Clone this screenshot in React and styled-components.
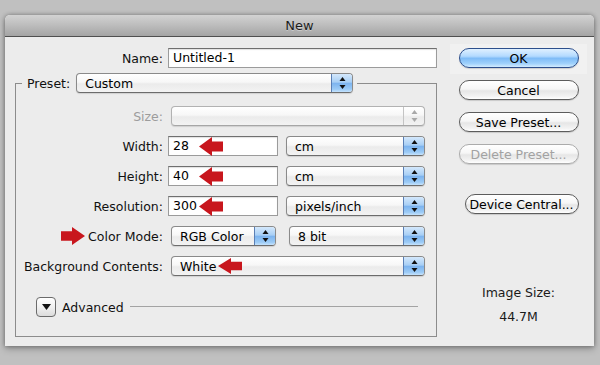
import styled, { createGlobalStyle } from "styled-components";

const GlobalStyle = createGlobalStyle`
  html, body {
    margin: 0;
    padding: 0;
  }
  body {
    width: 600px;
    height: 365px;
    overflow: hidden;
    background: #c0c0c0;
    font-family: "DejaVu Sans", "Liberation Sans", sans-serif;
    font-size: 12.5px;
    color: #111;
  }
`;

function RedArrow({ dir = "left", h = 19 }) {
  const pts =
    dir === "left"
      ? "0,9.5 13,0 13,4.5 24,4.5 24,14.5 13,14.5 13,19"
      : "24,9.5 11,0 11,4.5 0,4.5 0,14.5 11,14.5 11,19";
  return (
    <svg width="24" height={h} viewBox="0 0 24 19" preserveAspectRatio="none">
      <polygon points={pts} fill="#c8161d" />
    </svg>
  );
}

function Popup({ w, ml = 3, disabled, arrowAt, children }) {
  return (
    <PopupBox $w={w} $ml={ml} $disabled={disabled}>
      <PopupText $disabled={disabled}>{children}</PopupText>
      {arrowAt && (
        <Marker $left={arrowAt} $top={1}>
          <RedArrow h={16} />
        </Marker>
      )}
      <Stepper $disabled={disabled}>
        <svg width="7" height="12" viewBox="0 0 7 12">
          <path d="M3.5 0 L6.5 4 H0.5 Z M0.5 8 H6.5 L3.5 12 Z" fill={disabled ? "#a9a9a9" : "#111"} />
        </svg>
      </Stepper>
    </PopupBox>
  );
}

function TextField({ w, children, arrow }) {
  return (
    <Field $w={w}>
      {children}
      {arrow && (
        <Marker $left={30} $top={0}>
          <RedArrow />
        </Marker>
      )}
    </Field>
  );
}

export default function App() {
  return (
    <>
      <GlobalStyle />
      <Stage>
        <Window>
          <TitleBar>New</TitleBar>
          <Body>
            <Main>
              <NameRow>
                <Label>Name:</Label>
                <TextField w={269}>Untitled-1</TextField>
              </NameRow>
              <Group>
                <Legend>
                  <span>Preset:</span>
                  <Popup w={277} ml={6}>Custom</Popup>
                </Legend>
                <Rows>
                  <Row>
                    <Label $disabled>Size:</Label>
                    <Controls>
                      <Popup w={254} disabled />
                    </Controls>
                  </Row>
                  <Row>
                    <Label>Width:</Label>
                    <Controls>
                      <TextField w={110} arrow>28</TextField>
                      <Popup w={139} ml={8}>cm</Popup>
                    </Controls>
                  </Row>
                  <Row>
                    <Label>Height:</Label>
                    <Controls>
                      <TextField w={110} arrow>40</TextField>
                      <Popup w={139} ml={8}>cm</Popup>
                    </Controls>
                  </Row>
                  <Row>
                    <Label>Resolution:</Label>
                    <Controls>
                      <TextField w={110} arrow>300</TextField>
                      <Popup w={139} ml={8}>pixels/inch</Popup>
                    </Controls>
                  </Row>
                  <Row>
                    <Label>
                      <RedArrow dir="right" h={18} />
                      <span>Color Mode:</span>
                    </Label>
                    <Controls>
                      <Popup w={105}>RGB Color</Popup>
                      <Popup w={136} ml={13}>8 bit</Popup>
                    </Controls>
                  </Row>
                  <Row>
                    <Label>Background Contents:</Label>
                    <Controls>
                      <Popup w={254} arrowAt={46}>White</Popup>
                    </Controls>
                  </Row>
                </Rows>
                <AdvancedRow>
                  <Disclosure>
                    <svg width="9" height="6" viewBox="0 0 9 6">
                      <path d="M0 0 H9 L4.5 6 Z" fill="#111" />
                    </svg>
                  </Disclosure>
                  <span>Advanced</span>
                  <Rule />
                </AdvancedRow>
              </Group>
            </Main>
            <Side>
              <DefaultWell>
                <PushButton $primary>OK</PushButton>
              </DefaultWell>
              <ButtonStack>
                <PushButton>Cancel</PushButton>
                <PushButton $mt={12}>Save Preset...</PushButton>
                <PushButton $mt={12} $disabled>Delete Preset...</PushButton>
                <PushButton $mt={30} $w={114}>Device Central...</PushButton>
              </ButtonStack>
              <SizeInfo>
                <div>Image Size:</div>
                <SizeValue>44.7M</SizeValue>
              </SizeInfo>
            </Side>
          </Body>
        </Window>
      </Stage>
    </>
  );
}

const Stage = styled.div`
  padding: 15px 6px 0 5px;
`;

const Window = styled.div`
  width: 589px;
  height: 331px;
  background: #ececec;
  border-radius: 5px 5px 0 0;
  box-shadow: 0 0 4px rgba(0, 0, 0, 0.35), 0 3px 7px rgba(0, 0, 0, 0.25);
  display: flex;
  flex-direction: column;
  overflow: hidden;
`;

const TitleBar = styled.div`
  height: 21px;
  line-height: 21px;
  text-align: center;
  font-size: 13px;
  color: #1c1c1c;
  background: linear-gradient(#d2d2d2, #bcbcbc 50%, #a4a4a4);
  border-bottom: 1px solid #4f4f4f;
  text-shadow: 0 1px 0 rgba(255, 255, 255, 0.35);
`;

const Body = styled.div`
  flex: 1;
  display: flex;
  padding: 0 7px 0 10px;
`;

const Main = styled.div`
  width: 422px;
  padding-top: 11px;
`;

const NameRow = styled.div`
  display: grid;
  grid-template-columns: 148px 269px;
  column-gap: 5px;
  align-items: center;
`;

const Label = styled.div`
  display: flex;
  justify-content: flex-end;
  align-items: center;
  gap: 3px;
  white-space: nowrap;
  color: ${(p) => (p.$disabled ? "#9c9c9c" : "#111")};
`;

const Group = styled.fieldset`
  margin: 5px 0 0;
  padding: 0 0 19px;
  border: 1px solid #8c8c8c;
  min-width: 0;
`;

const Legend = styled.legend`
  margin-left: 6px;
  padding: 0 4px 0 5px;
  display: flex;
  align-items: center;
`;

const Rows = styled.div`
  padding-top: 13px;
  display: flex;
  flex-direction: column;
  gap: 10px;
`;

const Row = styled.div`
  display: grid;
  grid-template-columns: 147px 1fr;
  column-gap: 5px;
  align-items: center;
  height: 20px;
`;

const Controls = styled.div`
  display: flex;
  align-items: center;
`;

const Field = styled.div`
  position: relative;
  box-sizing: border-box;
  width: ${(p) => p.$w}px;
  height: 20px;
  padding-left: 4px;
  line-height: 18px;
  background: #fff;
  border: 1px solid #9b9b9b;
  border-top-color: #6f6f6f;
  box-shadow: inset 0 1px 1px rgba(0, 0, 0, 0.12);
  color: #000;
`;

const Marker = styled.div`
  position: absolute;
  left: ${(p) => p.$left}px;
  top: ${(p) => p.$top}px;
  line-height: 0;
`;

const PopupBox = styled.div`
  position: relative;
  box-sizing: border-box;
  width: ${(p) => p.$w}px;
  height: 20px;
  margin-left: ${(p) => p.$ml}px;
  display: flex;
  align-items: center;
  border: 1px solid ${(p) => (p.$disabled ? "#b2b2b2" : "#8a8a8a")};
  border-bottom-color: ${(p) => (p.$disabled ? "#a6a6a6" : "#6c6c6c")};
  border-radius: 4px;
  background: linear-gradient(#ffffff, #f7f7f7 45%, #ebebeb 55%, #f3f3f3);
  box-shadow: 0 1px 1px rgba(0, 0, 0, 0.12);
  overflow: hidden;
`;

const PopupText = styled.div`
  flex: 1;
  padding-left: 8px;
  white-space: nowrap;
  color: ${(p) => (p.$disabled ? "#9c9c9c" : "#000")};
`;

const Stepper = styled.div`
  width: 20px;
  height: 100%;
  display: flex;
  align-items: center;
  justify-content: center;
  border-left: 1px solid ${(p) => (p.$disabled ? "#c4c4c4" : "#5a7fb5")};
  background: ${(p) =>
    p.$disabled
      ? "transparent"
      : "linear-gradient(#d4e8fc, #a8cff5 45%, #7db4ef 52%, #9ccbf6 85%, #c6e3fd)"};
`;

const AdvancedRow = styled.div`
  margin-top: 21px;
  padding: 0 18px 0 20px;
  display: flex;
  align-items: center;
  gap: 6px;
`;

const Disclosure = styled.div`
  box-sizing: border-box;
  width: 20px;
  height: 20px;
  display: flex;
  align-items: center;
  justify-content: center;
  border: 1px solid #6b6b6b;
  border-radius: 4px;
  background: linear-gradient(#ffffff, #f0f0f0 50%, #dcdcdc);
`;

const Rule = styled.div`
  flex: 1;
  height: 1px;
  margin-top: -2px;
  background: #a3a3a3;
`;

const Side = styled.div`
  margin-left: 13px;
  width: 137px;
  padding-top: 7px;
  display: flex;
  flex-direction: column;
  align-items: center;
`;

const DefaultWell = styled.div`
  width: 137px;
  padding: 4px 0 6px;
  display: flex;
  justify-content: center;
  background: #f1f1f1;
`;

const ButtonStack = styled.div`
  width: 120px;
  margin-top: 6px;
  display: flex;
  flex-direction: column;
  align-items: flex-end;
`;

const PushButton = styled.div`
  box-sizing: border-box;
  width: ${(p) => p.$w || 120}px;
  height: 20px;
  margin-top: ${(p) => p.$mt || 0}px;
  display: flex;
  align-items: center;
  justify-content: center;
  white-space: nowrap;
  border-radius: 10px;
  border: 1px solid
    ${(p) => (p.$primary ? "#2d4f8c" : p.$disabled ? "#ababab" : "#5c5c5c")};
  color: ${(p) => (p.$disabled ? "#a2a2a2" : "#000")};
  background: ${(p) =>
    p.$primary
      ? "linear-gradient(#dff0ff, #b3daff 40%, #7fbcf7 52%, #9ed0fb 80%, #d2ebff)"
      : "linear-gradient(#ffffff, #f6f6f6 45%, #e6e6e6 55%, #f3f3f3 85%, #ffffff)"};
  box-shadow: 0 1px 1px rgba(0, 0, 0, 0.15);
`;

const SizeInfo = styled.div`
  margin-top: 71px;
  text-align: center;
  color: #1a1a1a;
`;

const SizeValue = styled.div`
  margin-top: 9px;
`;
